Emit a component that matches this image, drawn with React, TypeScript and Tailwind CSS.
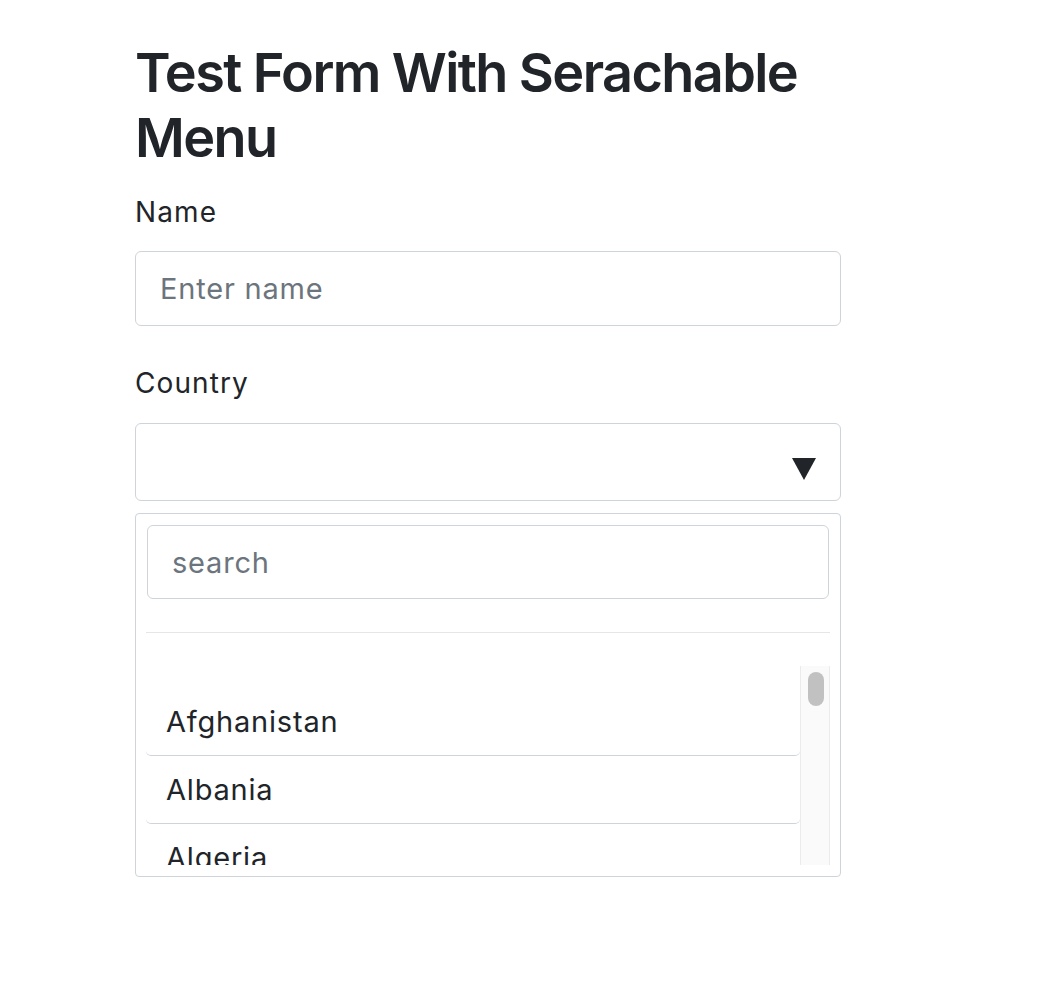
import React from "react";

const countries = ["Afghanistan", "Albania", "Algeria"];

export default function App() {
  return (
    <div className="min-h-[1002px] bg-white text-[#212529] font-['Inter','Noto_Sans',sans-serif]">
      <div className="ml-[135px] w-[706px] pt-[40px]">
        <h2 className="text-[54px] leading-[65px] font-semibold tracking-[-1.6px] mb-[21px]">
          Test Form With Serachable Menu
        </h2>

        <label className="block text-[28px] leading-[42px] tracking-[1.1px] mb-[18px]">Name</label>
        <input
          className="block w-full h-[75px] border border-[#ced4da] rounded-[6px] px-[24px] text-[29px] tracking-[0.8px] placeholder:text-[#6c757d] outline-none"
          placeholder="Enter name"
        />

        <label className="block text-[28px] leading-[42px] tracking-[1.1px] mt-[36px] mb-[19px]">Country</label>
        <div className="flex justify-end items-start h-[78px] border border-[#ced4da] rounded-[6px] pt-[34px] pr-[24px]">
          <svg width="24" height="22" viewBox="0 0 24 22">
            <path d="M0 0 H24 L12 22 Z" fill="#212529" />
          </svg>
        </div>

        <div className="mt-[12px] border border-[#ced4da] rounded-[4px] px-[10px] pt-[11px] pb-[11px]">
          <input
            className="block mx-[1px] w-[calc(100%-2px)] h-[74px] border border-[#ced4da] rounded-[6px] px-[24px] text-[29px] tracking-[0.8px] placeholder:text-[#6c757d] outline-none"
            placeholder="search"
          />
          <div className="mt-[33px] h-px bg-[#e6e6e6]" />
          <div className="mt-[33px] flex h-[199px]">
            <div className="flex-1 overflow-hidden pt-[22px]">
              {countries.map((c) => (
                <div
                  key={c}
                  className="px-[20px] pt-[12px] pb-[12px] text-[29px] leading-[43px] tracking-[0.8px] border-b border-[#ced4da] rounded-[5px]"
                >
                  {c}
                </div>
              ))}
            </div>
            <div className="w-[30px] bg-[#fafafa] border-l border-r border-[#ebebeb] pt-[6px] flex justify-center">
              <div className="ml-[2px] w-[16px] h-[34px] rounded-full bg-[#c1c1c1]" />
            </div>
          </div>
        </div>
      </div>
    </div>
  );
}
